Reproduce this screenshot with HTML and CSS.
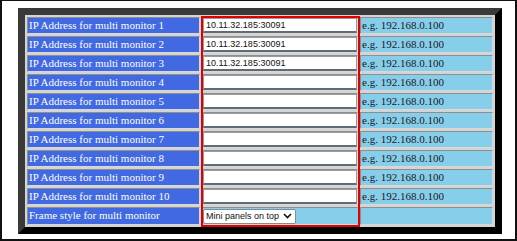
FILE: index.html
```html
<!DOCTYPE html>
<html lang="en">
<head>
    <meta charset="UTF-8">
    <title>Multi monitor settings</title>
    <link rel="stylesheet" href="styles.css">
</head>
<body>
    <div class="frame">
        <div class="panel">
            <table class="settings">
                <tr>
                    <td class="label">IP Address for multi monitor 1</td>
                    <td class="field"><input type="text" value="10.11.32.185:30091"></td>
                    <td class="hint">e.g. 192.168.0.100</td>
                </tr>
                <tr>
                    <td class="label">IP Address for multi monitor 2</td>
                    <td class="field"><input type="text" value="10.11.32.185:30091"></td>
                    <td class="hint">e.g. 192.168.0.100</td>
                </tr>
                <tr>
                    <td class="label">IP Address for multi monitor 3</td>
                    <td class="field"><input type="text" value="10.11.32.185:30091"></td>
                    <td class="hint">e.g. 192.168.0.100</td>
                </tr>
                <tr>
                    <td class="label">IP Address for multi monitor 4</td>
                    <td class="field"><input type="text"></td>
                    <td class="hint">e.g. 192.168.0.100</td>
                </tr>
                <tr>
                    <td class="label">IP Address for multi monitor 5</td>
                    <td class="field"><input type="text"></td>
                    <td class="hint">e.g. 192.168.0.100</td>
                </tr>
                <tr>
                    <td class="label">IP Address for multi monitor 6</td>
                    <td class="field"><input type="text"></td>
                    <td class="hint">e.g. 192.168.0.100</td>
                </tr>
                <tr>
                    <td class="label">IP Address for multi monitor 7</td>
                    <td class="field"><input type="text"></td>
                    <td class="hint">e.g. 192.168.0.100</td>
                </tr>
                <tr>
                    <td class="label">IP Address for multi monitor 8</td>
                    <td class="field"><input type="text"></td>
                    <td class="hint">e.g. 192.168.0.100</td>
                </tr>
                <tr>
                    <td class="label">IP Address for multi monitor 9</td>
                    <td class="field"><input type="text"></td>
                    <td class="hint">e.g. 192.168.0.100</td>
                </tr>
                <tr>
                    <td class="label">IP Address for multi monitor 10</td>
                    <td class="field"><input type="text"></td>
                    <td class="hint">e.g. 192.168.0.100</td>
                </tr>
                <tr>
                    <td class="label">Frame style for multi monitor</td>
                    <td class="field">
                        <span class="select-wrap">
                            <select>
                                <option>Mini panels on top</option>
                                <option>Mini panels on bottom</option>
                            </select>
                            <svg class="chevron" width="9" height="6" viewBox="0 0 9 6"><path d="M1 1l3.5 3.5L8 1" fill="none" stroke="#111" stroke-width="1.6"/></svg>
                        </span>
                    </td>
                    <td class="hint"></td>
                </tr>
            </table>
            <!-- red highlight box over the input column -->
            <div class="highlight"></div>
        </div>
    </div>
</body>
</html>
```

FILE: styles.css
```css
* {
    margin: 0;
    padding: 0;
    box-sizing: border-box;
}
body {
    background: #fff;
}
.frame {
    width: 517px;
    height: 241px;
    border: 1px solid #111;
    border-width: 1px 2px 2px 2px;
    padding: 7px 0 0 16px;
}
.panel {
    position: relative;
    width: 484px;
}
.settings {
    width: 484px;
    border-collapse: separate;
    border-spacing: 2px;
    border: 7px outset #3a3a3a;
    background: #d4d4d4;
    table-layout: fixed;
}
.settings td {
    height: 17px;
    border: 1px solid;
    border-color: #8e8e8e #d8d8d8 #d8d8d8 #8e8e8e;
    font-family: "Liberation Serif", "Times New Roman", serif;
    font-size: 11px;
    line-height: 15px;
    white-space: nowrap;
    overflow: hidden;
}
.label {
    width: 173px;
    background: #4169e1;
    color: #fff;
    padding-left: 1px;
}
.field {
    width: 156px;
    background: #fff;
}
.hint {
    width: 133px;
    background: #87ceeb;
    color: #1a1a1a;
    padding-left: 1px;
}
.field input {
    display: block;
    width: 100%;
    height: 15px;
    border: 1px solid #9a9a9a;
    border-bottom: 2px solid #5f6b75;
    padding: 0 2px;
    font-family: "Liberation Sans", Arial, sans-serif;
    font-size: 9px;
    color: #111;
    background: #fff;
    outline: none;
}
.settings td.field:has(.select-wrap) {
    background: #87ceeb;
    border-right-color: #87ceeb;
}
.select-wrap {
    position: relative;
    display: inline-block;
    vertical-align: top;
}
.select-wrap select {
    appearance: none;
    -webkit-appearance: none;
    height: 15px;
    width: 93px;
    border: 1px solid #8a8a8a;
    border-radius: 2px;
    background: #fff;
    padding: 0 0 0 2px;
    font-family: "Liberation Sans", Arial, sans-serif;
    font-size: 9px;
    color: #111;
}
.chevron {
    position: absolute;
    right: 4px;
    top: 5px;
    pointer-events: none;
}
.highlight {
    position: absolute;
    left: 183px;
    top: 8px;
    width: 159px;
    height: 211px;
    border: 2px solid #e00000;
    pointer-events: none;
}
```
